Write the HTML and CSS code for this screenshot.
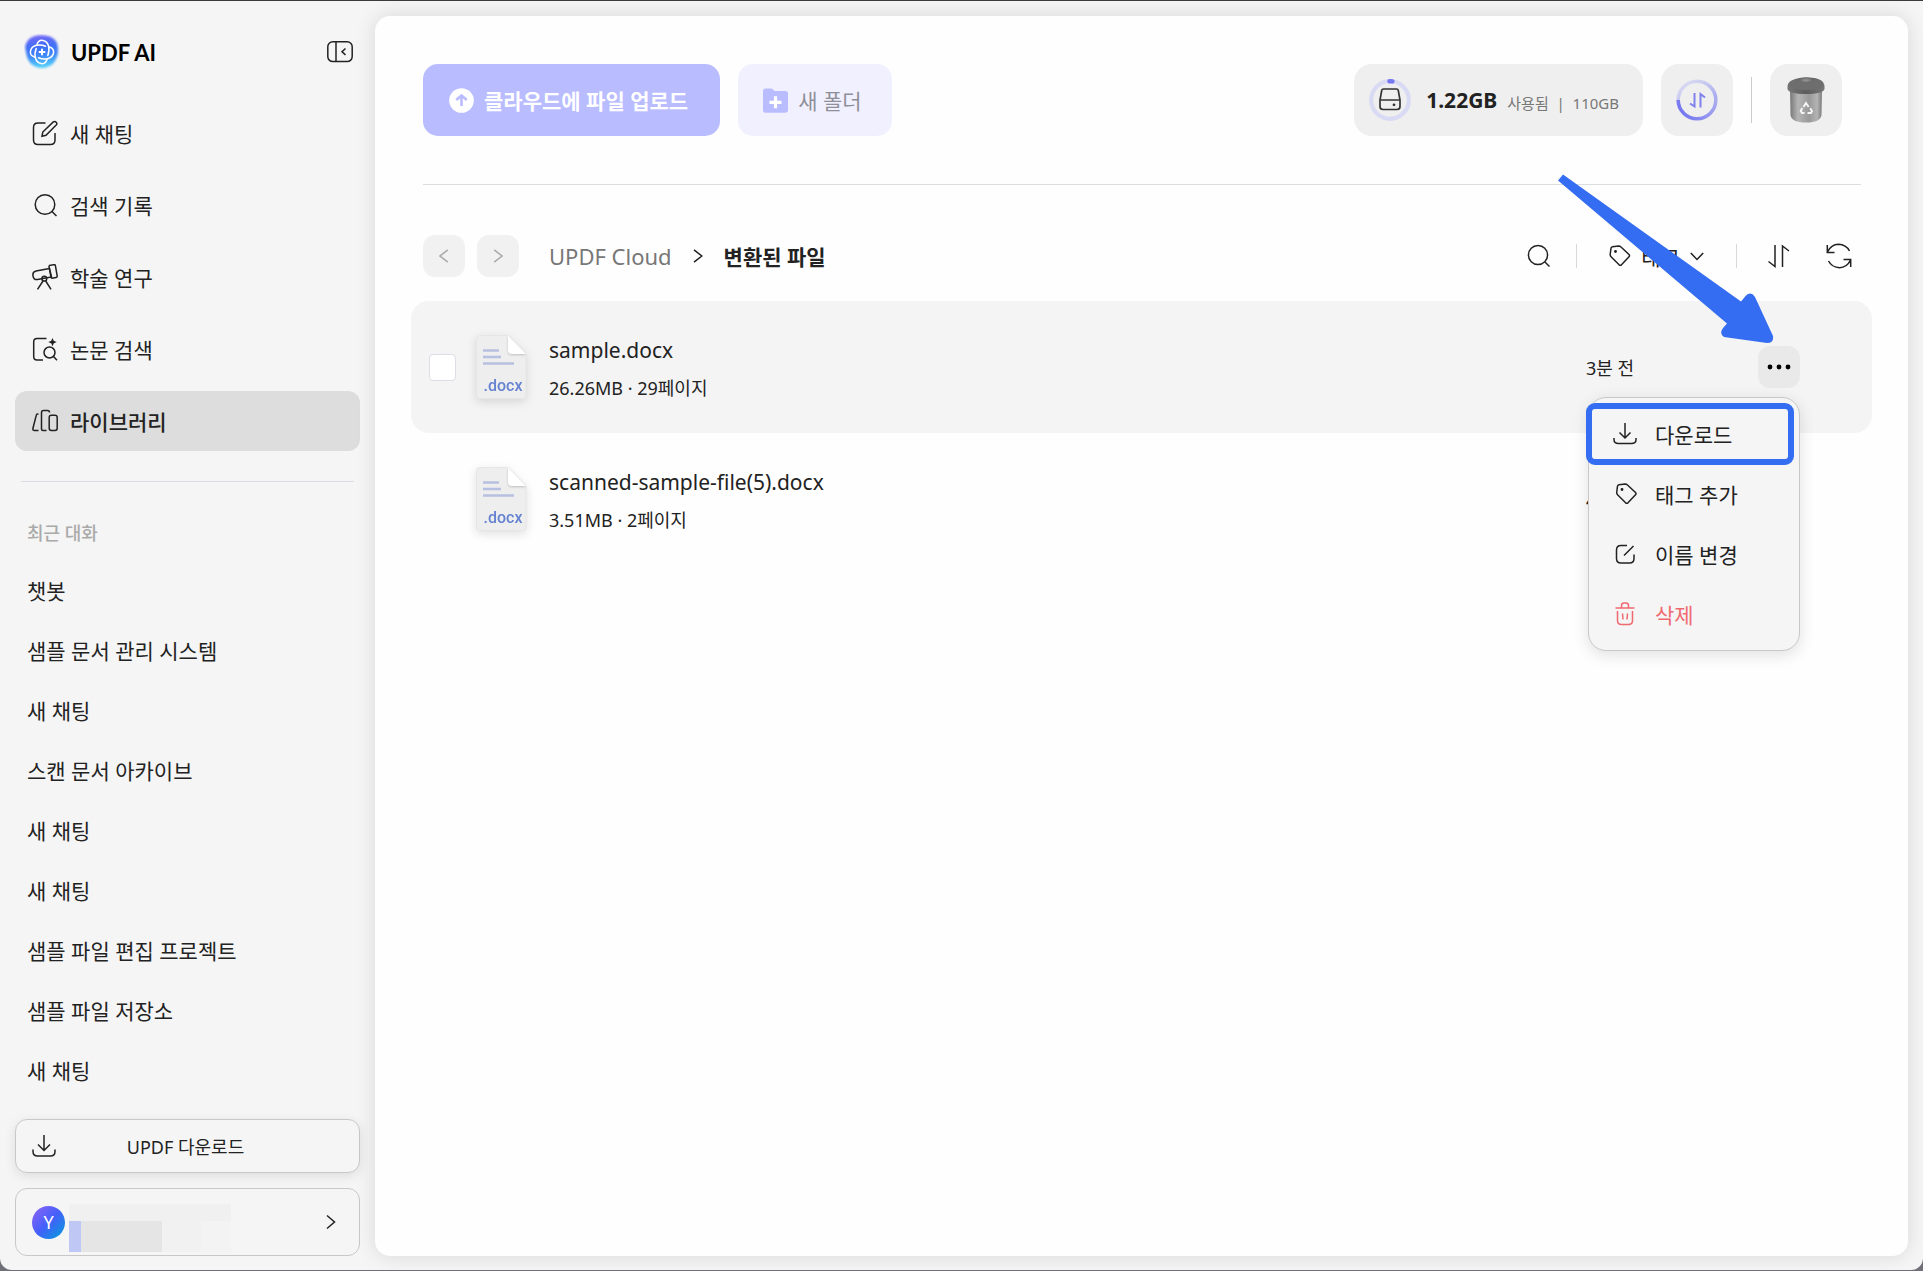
FILE: index.html
```html
<!doctype html>
<html lang="ko">
  <head>
    <meta charset="utf-8">
    <title>UPDF AI</title>
    <link rel="stylesheet" href="styles.css">
  </head>
  <body>
    <div class="app">
      <aside class="sidebar">
        <div class="brand">
          <svg class="logo" width="36" height="36" viewBox="0 0 36 36">
            <defs>
              <linearGradient id="logoFill" x1="0" y1="0" x2="0.1" y2="1">
                <stop offset="0" stop-color="#7a68f5"/>
                <stop offset="0.4" stop-color="#3f6ff8"/>
                <stop offset="0.65" stop-color="#3f86f6"/>
                <stop offset="1" stop-color="#55cffb"/>
              </linearGradient>
              <filter id="logoSoft" x="-20%" y="-20%" width="140%" height="140%"><feGaussianBlur stdDeviation="1.2"/></filter>
            </defs>
            <path d="M3 8C7 1 15 1 21 1.500C29 2 34 7 34 15C34.500 26 28 34 18 34C8 34 3 27 2 18C1 13 1 11 3 8Z" fill="url(#logoFill)" filter="url(#logoSoft)"/>
            <g fill="none" stroke="#fff" stroke-width="1.500" stroke-linecap="round">
              <path id="petal" d="M13 10.500C14 7.500 16.500 6 19 6.500C24.500 7.500 26.500 14.500 23.800 21.500"/>
              <use href="#petal" transform="rotate(90 18 18)"/>
              <use href="#petal" transform="rotate(180 18 18)"/>
              <use href="#petal" transform="rotate(270 18 18)"/>
            </g>
            <path d="M18 15.500v5M15.500 18h5" stroke="#fff" stroke-width="2" stroke-linecap="round"/>
          </svg>
          <span class="brand-name">UPDF AI</span>
          <button class="icon-btn collapse" aria-label="사이드바 접기">
            <svg width="26" height="22" viewBox="0 0 26 22"><rect x="0.800" y="0.800" width="24.400" height="19.800" rx="5"/><path d="M9 1v19.500M18.500 7.500L15 10.700l3.500 3.200"/></svg>
          </button>
        </div>

        <nav class="menu">
          <a class="menu-item" href="#">
            <svg width="26" height="26" viewBox="0 0 26 26"><path d="M13.500 3H6Q1.500 3 1.500 7.500V20Q1.500 24.500 6 24.500H18.500Q23 24.500 23 20V13"/><path d="M10 16.200l.8-4.200L21.300 1.900Q22.800.8 24.200 2.200 25.500 3.700 24.200 5.100L14 15.300z"/></svg>
            새 채팅
          </a>
          <a class="menu-item" href="#">
            <svg width="26" height="26" viewBox="0 0 26 26"><circle cx="13" cy="12.500" r="9.800"/><path d="M20 19.500l4.500 4.500"/></svg>
            검색 기록
          </a>
          <a class="menu-item" href="#">
            <svg width="26" height="26" viewBox="0 0 26 26"><path d="M17.500 4.500L4 7Q.3 8 1 11.800 1.500 16 5.500 15.400L19.500 13z"/><path d="M17.500 1.500l4.700-.9q1 0 1.200 1L25.200 12q.1 1.200-1 1.400l-4.300.8q-.7 0-.9-1L17 2.500z"/><circle cx="12.300" cy="14.700" r="2.400"/><path d="M11 17L5.500 25.300M13.700 17L19 25.300"/></svg>
            학술 연구
          </a>
          <a class="menu-item" href="#">
            <svg width="26" height="26" viewBox="0 0 26 26"><path d="M14.500 2.500H5Q1.700 2.500 1.700 6V20.500Q1.700 24 5 24H11"/><circle cx="17.500" cy="16.500" r="5.500"/><path d="M21.500 20.500l3.500 3.700"/><path class="solid" d="M20.500 3.800l.7 1.600 1.600.7-1.600.7-.7 1.600-.7-1.600-1.600-.7 1.600-.7z"/></svg>
            논문 검색
          </a>
          <a class="menu-item active" href="#">
            <svg width="26" height="26" viewBox="0 0 26 26"><path d="M6.500 6H5.500Q4.500 6 4.300 7.200L.9 20.500Q.6 22.500 2.500 22.500H6.500M14.500 22.500H11Q9.500 22.500 9.500 21V4.500Q9.500 2.500 11.500 2.500H15.500Q17.500 2.500 17.500 4.500"/><rect x="17.200" y="7.200" width="8" height="15.300" rx="2.200"/></svg>
            라이브러리
          </a>
        </nav>

        <h2 class="recent-title">최근 대화</h2>
        <ul class="recent">
          <li><a href="#">챗봇</a></li>
          <li><a href="#">샘플 문서 관리 시스템</a></li>
          <li><a href="#">새 채팅</a></li>
          <li><a href="#">스캔 문서 아카이브</a></li>
          <li><a href="#">새 채팅</a></li>
          <li><a href="#">새 채팅</a></li>
          <li><a href="#">샘플 파일 편집 프로젝트</a></li>
          <li><a href="#">샘플 파일 저장소</a></li>
          <li><a href="#">새 채팅</a></li>
        </ul>

        <button class="download">
          <svg width="24" height="24" viewBox="0 0 24 24"><path d="M12 1v15M6 10.500l6 6 6-6M1 15.500v2Q1 22 5.500 22h13Q23 22 23 17.500v-2"/></svg>
          <span>UPDF 다운로드</span>
        </button>
        <button class="account" aria-label="계정">
          <span class="avatar">Y</span>
          <span class="masked"><i class="m1"></i><i class="m2"></i><i class="m3"></i><i class="m4"></i><i class="m5"></i></span>
          <svg width="10" height="16" viewBox="0 0 10 16"><path d="M1 1.500l7.500 6.500L1 14.500"/></svg>
        </button>
      </aside>

      <main class="card">
        <header class="top">
          <button class="upload">
            <svg width="25" height="25" viewBox="0 0 25 25"><circle cx="12.500" cy="12.500" r="12.300" fill="#fff"/><path d="M12.500 18V8M7.200 12l5.300-4.500 5.300 4.500" fill="none" stroke="#b9bcff" stroke-width="2.600"/></svg>
            클라우드에 파일 업로드
          </button>
          <button class="new-folder">
            <svg width="25" height="25" viewBox="0 0 25 25"><path d="M2.500.5H8q1 0 1.800.8L11.500 3H22q3 0 3 2.500V22q0 2.700-3 2.700H2.500Q0 24.700 0 22V3Q0 .5 2.500.5z" fill="#b9bcff"/><path d="M12.500 8.300v12M6.500 14.300h12" stroke="#fff" stroke-width="3.200"/></svg>
            새 폴더
          </button>
          <div class="storage">
            <svg width="42" height="42" viewBox="0 0 42 42" fill="none">
              <circle cx="21" cy="21" r="18.800" stroke="#d9daf4" stroke-width="4.200"/>
              <path d="M20.500 2.300Q22 2.100 23.400 2.400" stroke="#7679f0" stroke-width="4.500" stroke-linecap="round"/>
              <path d="M14.500 10h13q1.500 0 1.800 1.500l1.700 9.500v6.500q0 3-3 3H14q-3 0-3-3V21l1.700-9.500Q13 10 14.500 10z" stroke="#333" stroke-width="1.700"/>
              <path d="M11.500 21h19" stroke="#333" stroke-width="1.700"/><circle cx="25" cy="25.800" r="1.400" fill="#333"/>
            </svg>
            <b>1.22GB</b><span>사용됨&nbsp; |&nbsp; 110GB</span>
          </div>
          <button class="tile" aria-label="전송 목록">
            <svg width="42" height="42" viewBox="0 0 42 42" fill="none">
              <defs>
                <linearGradient id="ringA" x1="0" y1="0" x2="1" y2="0.800"><stop offset="0" stop-color="#e3e3f2"/><stop offset="1" stop-color="#aaacef"/></linearGradient>
                <linearGradient id="ringB" x1="1" y1="0" x2="0" y2="0.300"><stop offset="0" stop-color="#aaacef"/><stop offset="1" stop-color="#7679f0"/></linearGradient>
              </defs>
              <path d="M2.200 21A18.800 18.800 0 0 1 39.800 21" stroke="url(#ringA)" stroke-width="3.600"/>
              <path d="M39.800 21A18.800 18.800 0 0 1 2.200 21" stroke="url(#ringB)" stroke-width="3.600"/>
              <path d="M18.500 14v13.500l-4.500-3M24.500 28.500V15l4.500 3.500" stroke="#7f82ec" stroke-width="2"/>
            </svg>
          </button>
          <span class="bar tall"></span>
          <button class="tile" aria-label="휴지통">
            <svg width="38" height="46" viewBox="0 0 38 46">
              <defs>
                <linearGradient id="can" x1="0" y1="0" x2="1" y2="0"><stop offset="0" stop-color="#777"/><stop offset="0.250" stop-color="#b4b4b4"/><stop offset="0.600" stop-color="#999"/><stop offset="0.850" stop-color="#b4b4b4"/><stop offset="1" stop-color="#7a7a7a"/></linearGradient>
                <linearGradient id="rim" x1="0" y1="0" x2="1" y2="0"><stop offset="0" stop-color="#777"/><stop offset="0.500" stop-color="#5c5c5c"/><stop offset="1" stop-color="#777"/></linearGradient>
                <radialGradient id="knob"><stop offset="0" stop-color="#999"/><stop offset="1" stop-color="#666"/></radialGradient>
              </defs>
              <path d="M3 12L3.500 38Q4.500 45.500 19 45.500T34.500 38L35 12z" fill="url(#can)"/>
              <path d="M.5 9Q1.500 1 19 .5T37.500 9V12Q36 17 19 17T.5 12z" fill="url(#rim)"/>
              <ellipse cx="19" cy="7.500" rx="17" ry="5.500" fill="#6e6e6e"/>
              <path d="M12 1Q12.500 6 19 6T26 1Q19 0 12 1z" fill="url(#knob)"/>
              <g fill="none" stroke="#f4f4f4" stroke-width="2"><path d="M16.500 30l2.500-4 2.700 4M17.500 36h-2.500l-1.300-2 1.600-3M20.500 36H24l1-1.800-1.700-3"/></g>
            </svg>
          </button>
        </header>

        <div class="toolbar">
          <button class="step" aria-label="뒤로"><svg width="10" height="14" viewBox="0 0 10 14"><path d="M8.800.8L1 7l7.800 6.200"/></svg></button>
          <button class="step" aria-label="앞으로"><svg width="10" height="14" viewBox="0 0 10 14"><path d="M1.200.8L9 7l-7.800 6.200"/></svg></button>
          <div class="crumbs">
            <a href="#">UPDF Cloud</a>
            <svg width="10" height="14" viewBox="0 0 10 14"><path d="M1 .8L8.800 7 1 13.200"/></svg>
            <b>변환된 파일</b>
          </div>
          <div class="tools">
            <button class="icon-btn search" aria-label="검색"><svg width="24" height="24" viewBox="0 0 24 24"><circle cx="11" cy="11" r="9.600"/><path d="M18 18l4.500 4.500"/></svg></button>
            <span class="bar"></span>
            <button class="tag-btn">
              <svg width="22" height="22" viewBox="0 0 22 22"><path d="M3.500 1.800L9.500 1q1.500 0 2.500 1l8 7.500q1 1.200 0 2.300l-7.500 8q-1.200 1-2.400 0L2.300 12Q1 10.800 1.200 9.500L2 3.200Q2.200 2 3.500 1.800z"/><circle class="solid" cx="6.500" cy="6.500" r=".7"/></svg>
              태그
              <svg width="14" height="9" viewBox="0 0 14 9"><path d="M.8 1L7 7.500 13.200 1"/></svg>
            </button>
            <span class="bar"></span>
            <button class="icon-btn" aria-label="정렬"><svg width="24" height="24" viewBox="0 0 24 24"><path d="M8 1v21.500L1.500 17.500M15.500 23V2l6.500 5"/></svg></button>
            <button class="icon-btn" aria-label="새로 고침"><svg width="26" height="26" viewBox="0 0 26 26"><path d="M1.300 2v7.500H8.500M1.500 9Q5 1.500 12.500 1.300 20 1.500 23.500 8M24.700 24v-7.500h-7.200M24.500 17Q21 24.500 13.500 24.700 6 24.500 2.500 18"/></svg></button>
          </div>
        </div>

        <ul class="files">
          <li class="file selected">
            <input type="checkbox" aria-label="sample.docx 선택">
            <svg class="doc" width="50" height="64" viewBox="0 0 50 64">
              <path d="M4 .5H32L50 19V60q0 3.500-3.500 3.500H3.500Q.5 63.500.5 60V4Q.5.500 4 .5z" fill="#eeeeef" stroke="#e6e6e6"/>
              <path class="fold" d="M32 .5V15q0 4 4 4H50z"/>
              <path d="M7 15.500h16M7 22h18M7 28.500h31" stroke="#b6c0e0" stroke-width="2.600"/>
              <text x="27" y="56" text-anchor="middle">.docx</text>
            </svg>
            <div class="info">
              <a class="name" href="#">sample.docx</a>
              <span class="meta">26.26MB · 29페이지</span>
            </div>
            <time class="date">3분 전</time>
            <div class="more-wrap">
              <button class="more" aria-label="더보기"><svg width="24" height="6" viewBox="0 0 24 6"><circle cx="3" cy="3" r="2.400"/><circle cx="12" cy="3" r="2.400"/><circle cx="21" cy="3" r="2.400"/></svg></button>
              <div class="popup">
                <button class="popup-item picked">
                  <svg width="24" height="24" viewBox="0 0 24 24"><path d="M12 1v14.500M6.500 10.500l5.500 5.500 5.500-5.500M1 16v1.500Q1 21.500 5.500 21.500h13Q23 21.500 23 17.500V16"/></svg>
                  다운로드
                </button>
                <button class="popup-item">
                  <svg width="24" height="24" viewBox="0 0 24 24"><path d="M6 2.800L12 2q1.500 0 2.500 1l8 7.500q1 1.200 0 2.300l-7.500 8q-1.200 1-2.400 0L4.800 13Q3.500 11.800 3.700 10.500L4.500 4.200Q4.700 3 6 2.800z"/><circle class="solid" cx="9" cy="7.500" r=".7"/></svg>
                  태그 추가
                </button>
                <button class="popup-item">
                  <svg width="24" height="24" viewBox="0 0 24 24"><path d="M14 3.500H8Q3.500 3.500 3.500 8v8.500Q3.500 21 8 21h8.500Q21 21 21 16.500V12.500M11 13.500L20.500 4"/></svg>
                  이름 변경
                </button>
                <button class="popup-item danger">
                  <svg width="24" height="24" viewBox="0 0 24 24"><path d="M2.500 6h19M8.500 6V3.500Q8.500 1 11 1h2q2.500 0 2.500 2.500V6M4.500 9v9.500Q4.500 22.500 8.500 22.500h7Q19.500 22.500 19.500 18.500V9M9.500 11.500l.5 6M14.500 11.500l-.5 6"/></svg>
                  삭제
                </button>
              </div>
              <svg class="pointer" width="220" height="174" viewBox="0 0 220 174">
                <path d="M3 9.500L8 3.500L186 130.500L191 124.500Q196 120 200 126L218 165Q219 172 212 172L169 166Q164 163 168 157L172 152.500z"/>
              </svg>
            </div>
          </li>
          <li class="file">
            <input type="checkbox" aria-label="scanned-sample-file(5).docx 선택">
            <svg class="doc" width="50" height="64" viewBox="0 0 50 64">
              <path d="M4 .5H32L50 19V60q0 3.500-3.500 3.500H3.500Q.5 63.500.5 60V4Q.5.500 4 .5z" fill="#eeeeef" stroke="#e6e6e6"/>
              <path class="fold" d="M32 .5V15q0 4 4 4H50z"/>
              <path d="M7 15.500h16M7 22h18M7 28.500h31" stroke="#b6c0e0" stroke-width="2.600"/>
              <text x="27" y="56" text-anchor="middle">.docx</text>
            </svg>
            <div class="info">
              <a class="name" href="#">scanned-sample-file(5).docx</a>
              <span class="meta">3.51MB · 2페이지</span>
            </div>
            <time class="date">4분 전</time>
            <div class="more-wrap"></div>
          </li>
        </ul>
      </main>
    </div>
  </body>
</html>
```

FILE: styles.css
```css
* {
  box-sizing: border-box;
}

body {
  margin: 0;
  background: #707078;
  color: #222;
  font-family: "Noto Sans", "Noto Sans CJK KR", sans-serif;
  font-size: 21px;
}

a {
  color: inherit;
  text-decoration: none;
}

button {
  border: none;
  padding: 0;
  background: none;
  color: inherit;
  font: inherit;
}

ul {
  list-style: none;
  margin: 0;
  padding: 0;
}

svg {
  display: block;
  flex: none;
}

.app {
  display: flex;
  height: calc(100vh - 1px);
  border-top: 1px solid #3c3a3e;
  border-radius: 0 0 12px 12px;
  background: #f5f5f5;
  overflow: hidden;
}

/* line icons */
.icon-btn svg,
.menu-item svg,
.download svg,
.account svg,
.step svg,
.crumbs svg,
.tag-btn svg,
.popup-item svg {
  fill: none;
  stroke: currentColor;
  stroke-width: 1.5px;
}

.solid {
  fill: currentColor;
}

.icon-btn {
  display: flex;
  justify-content: center;
  align-items: center;
  width: 36px;
  height: 42px;
}

/* sidebar */
.sidebar {
  display: flex;
  flex-direction: column;
  flex: none;
  width: 375px;
  padding: 0 15px 14px;
}

.brand {
  display: flex;
  align-items: center;
  flex: none;
  height: 102px;
  padding-left: 9px;
}

.brand-name {
  margin-left: 11px;
  color: #000;
  font-family: Lato, sans-serif;
  font-size: 22px;
  font-weight: 700;
}

.collapse {
  margin-left: auto;
  width: 40px;
}

.menu {
  display: flex;
  flex-direction: column;
  gap: 12px;
  padding-bottom: 30px;
}

.menu-item {
  display: flex;
  align-items: center;
  gap: 12px;
  height: 60px;
  padding-left: 17px;
  border-radius: 12px;
}

.menu-item.active {
  background: #ddd;
  font-weight: 500;
}

.recent-title {
  flex: none;
  margin: 0 6px;
  padding: 36px 6px 13px;
  border-top: 1px solid #d9dbe6;
  color: #aaa;
  font-size: 18px;
  font-weight: 500;
  line-height: 30px;
}

.recent {
  flex: 1;
  min-height: 0;
  overflow: hidden;
}

.recent a {
  display: block;
  padding: 0 12px;
  line-height: 60px;
}

.download,
.account {
  display: flex;
  align-items: center;
  flex: none;
  padding: 0 16px;
  border: 1px solid #c8c8c8;
  border-radius: 12px;
  background: #f5f5f5;
}

.download {
  height: 54px;
  font-size: 18px;
  box-shadow: 0 3px 12px rgba(0, 0, 0, 0.1);
}

.download span {
  flex: 1;
  padding-right: 28px;
  text-align: center;
}

.account {
  height: 68px;
  margin-top: 15px;
}

.avatar {
  width: 33px;
  border-radius: 50%;
  background: linear-gradient(135deg, #9163f5, #4460fa 50%, #00a0d8);
  color: #fff;
  font-size: 18px;
  line-height: 33px;
}

/* blocked out user name */
.masked {
  display: grid;
  grid-template-columns: 12px 81px 39px 30px;
  grid-template-rows: 17px 31px;
  margin: 12px auto 0 4px;
}

.m1 {
  grid-column: 1 / 5;
  background: #f0f0f0;
}

.m2 {
  background: #bfc7f4;
}

.m3 {
  background: #e5e5e5;
}

.m4 {
  background: #f1f1f1;
}

.m5 {
  background: #f3f3f3;
}

.account svg {
  margin-right: 7px;
}

/* main card */
.card {
  flex: 1;
  min-width: 0;
  margin: 15px 15px 14px 0;
  padding: 48px 47px 0 48px;
  border-radius: 15px;
  background: #fefefe;
  box-shadow: 0 0 20px rgba(0, 0, 0, 0.12);
}

.top {
  display: flex;
  align-items: center;
  gap: 18px;
  padding: 0 19px 48px 0;
  border-bottom: 1px solid #dcdde0;
}

.upload,
.new-folder {
  display: flex;
  align-items: center;
  gap: 10px;
  height: 72px;
  border-radius: 15px;
}

.upload {
  padding: 0 32px 0 26px;
  background: #b9bcff;
  color: #fff;
  font-weight: 700;
}

.new-folder {
  padding: 0 30px 0 25px;
  background: #f1f0ff;
  color: #8f8f98;
}

.storage {
  display: flex;
  align-items: center;
  height: 72px;
  margin-left: auto;
  padding: 0 24px 0 15px;
  border-radius: 18px;
  background: #efefef;
}

.storage b {
  margin: 0 10px 0 15px;
}

.storage span {
  padding-top: 5px;
  color: #777;
  font-size: 15px;
}

.tile {
  display: flex;
  justify-content: center;
  align-items: center;
  width: 72px;
  height: 72px;
  border-radius: 18px;
  background: #efefef;
}

.bar {
  width: 1px;
  height: 24px;
  background: #d8d8d8;
}

.bar.tall {
  height: 46px;
  background: #ccc;
}

.toolbar {
  display: flex;
  align-items: center;
  gap: 12px;
  padding: 50px 4px 24px 0;
}

.step {
  display: flex;
  justify-content: center;
  align-items: center;
  width: 42px;
  height: 42px;
  border-radius: 12px;
  background: #f1f1f1;
  color: #aaa;
}

.crumbs {
  display: flex;
  align-items: center;
  gap: 21px;
  margin-left: 18px;
}

.crumbs a {
  color: #777;
  font-size: 22px;
}

.tools {
  display: flex;
  align-items: center;
  gap: 24px;
  margin-left: auto;
}

.search {
  width: 26px;
}

.tag-btn {
  display: flex;
  align-items: center;
  gap: 10px;
  padding: 0 8px;
}

/* file list */
.files {
  margin: 0 -11px 0 -12px;
}

.file {
  display: flex;
  align-items: center;
  height: 132px;
  padding: 0 72px 0 18px;
  border-radius: 18px;
}

.file.selected {
  background: #f4f4f4;
}

.file input {
  appearance: none;
  width: 27px;
  height: 27px;
  margin: 0 20px 0 0;
  border: 1px solid #dcdde6;
  border-radius: 4px;
  background: #fff;
}

.file:not(.selected) input {
  visibility: hidden;
}

.doc {
  overflow: visible;
  filter: drop-shadow(0 3px 5px rgba(0, 0, 0, 0.12));
}

.doc .fold {
  fill: #fff;
  filter: drop-shadow(0 1px 1px rgba(0, 0, 0, 0.2));
}

.doc text {
  fill: #6583d0;
  font-family: Roboto, sans-serif;
  font-size: 16px;
  font-weight: 500;
}

.info {
  flex: 1;
  padding: 4px 0 0 23px;
}

.name,
.meta {
  display: block;
  line-height: 38px;
}

.meta,
.date {
  font-size: 18px;
}

.date {
  width: 172px;
}

.more-wrap {
  position: relative;
  width: 42px;
}

.more {
  display: flex;
  justify-content: center;
  align-items: center;
  width: 42px;
  height: 42px;
  border-radius: 12px;
  background: #e9e9e9;
}

.popup {
  position: absolute;
  z-index: 1;
  top: 51px;
  right: 0;
  width: 212px;
  padding: 6px 0;
  border: 1px solid #c8c8c8;
  border-radius: 18px;
  background: #f5f5f5;
  box-shadow: 0 4px 16px rgba(0, 0, 0, 0.12);
}

.popup-item {
  display: flex;
  align-items: center;
  gap: 18px;
  position: relative;
  width: 100%;
  height: 60px;
  padding-left: 24px;
}

.popup-item.danger {
  color: #ef6a70;
}

/* blue frame round the highlighted item */
.picked::after {
  content: "";
  position: absolute;
  top: -1px;
  bottom: -1px;
  left: -3px;
  right: 5px;
  border: 6px solid #346df1;
  border-radius: 9px;
}

.pointer {
  position: absolute;
  z-index: 2;
  top: -175px;
  right: 25px;
  fill: #346df1;
  pointer-events: none;
}
```
